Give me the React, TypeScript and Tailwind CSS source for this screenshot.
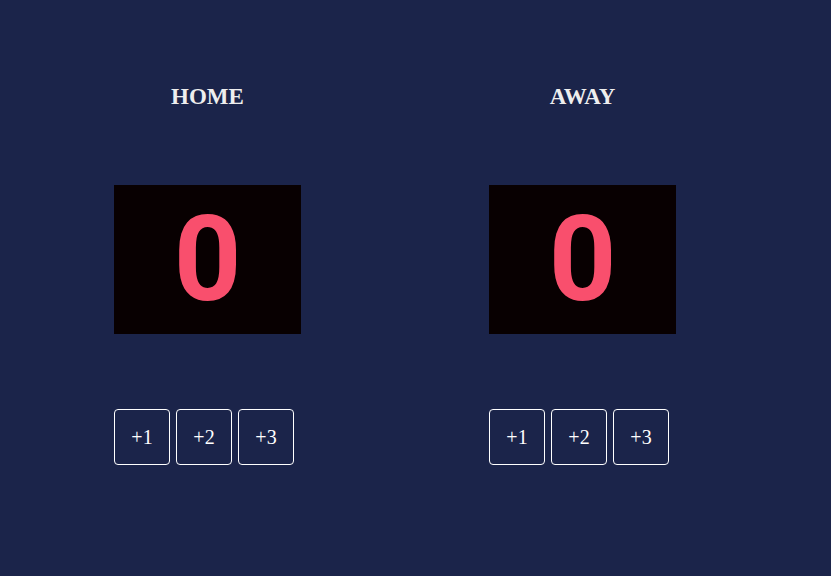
const TeamPanel = ({ name }: { name: string }) => {
  return (
    <div className="w-[187px] flex flex-col items-center">
      <h2 className="mt-[1px] h-[26px] leading-[26px] text-[23px] font-bold text-[#eeeeee]">{name}</h2>
      <div className="mt-[75px] w-[187px] h-[149px] bg-[#080001] flex items-center justify-center">
        <span
          className="text-[118px] leading-none font-bold text-[#f94f6d]"
          style={{ fontFamily: "Roboto, 'Liberation Sans', sans-serif" }}
        >
          0
        </span>
      </div>
      <div className="mt-[75px] w-full flex gap-[6px]">
        {["+1", "+2", "+3"].map((label) => (
          <button
            key={label}
            className="w-[56px] h-[56px] border border-white rounded-[4px] text-white text-[20px] bg-transparent"
          >
            {label}
          </button>
        ))}
      </div>
    </div>
  )
}

const App = () => {
  return (
    <div
      className="w-full h-[576px] bg-[#1b244a] flex pl-[114px] pt-[83px] gap-[188px]"
      style={{ fontFamily: "'Liberation Serif', 'Times New Roman', serif" }}
    >
      <TeamPanel name="HOME" />
      <TeamPanel name="AWAY" />
    </div>
  )
}

export default App;
